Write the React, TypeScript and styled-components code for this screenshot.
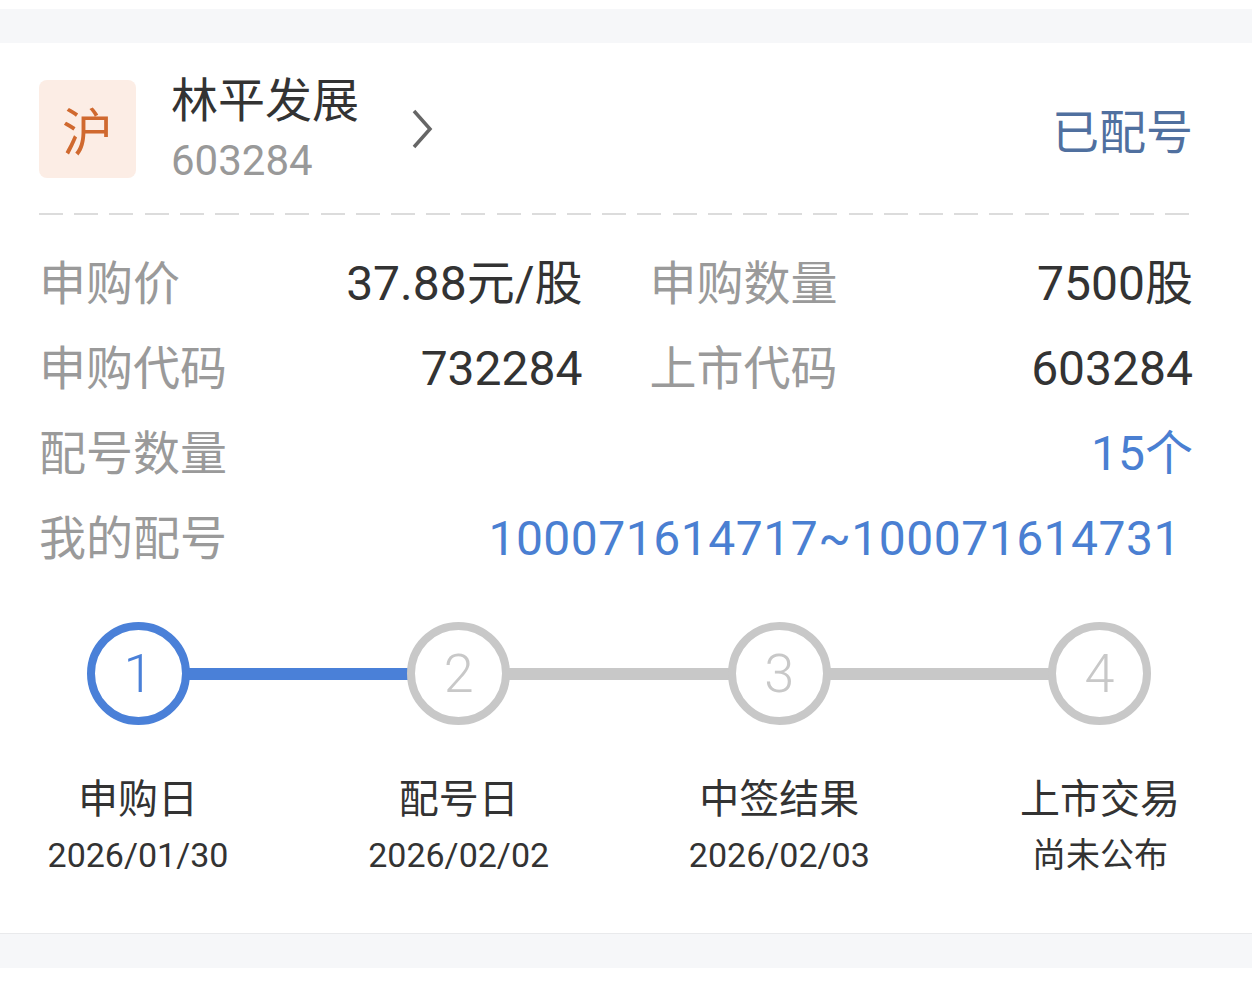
import React from 'react';
import styled, { createGlobalStyle } from 'styled-components';

const GlobalStyle = createGlobalStyle`
  html, body {
    margin: 0;
    padding: 0;
    background: #ffffff;
  }
  body {
    font-family: Roboto, "Noto Sans CJK SC", sans-serif;
    color: #333333;
  }
`;

const Page = styled.div`
  padding-top: 9px;
  background: #ffffff;
`;

const GrayBand = styled.div<{ $topLine?: boolean }>`
  height: 34px;
  background: #f6f7f9;
  border-top: ${(p) => (p.$topLine ? '1px solid #e9eaec' : 'none')};
`;

const Card = styled.div`
  background: #ffffff;
  padding: 29px 59px 58px 39px;
`;

const Header = styled.div`
  display: flex;
  align-items: center;
`;

const Badge = styled.div`
  width: 97px;
  height: 98px;
  border-radius: 8px;
  background: #fcede5;
  color: #d0692f;
  font-family: "Noto Sans CJK SC", sans-serif;
  font-size: 51px;
  display: flex;
  align-items: center;
  justify-content: center;
  flex-shrink: 0;
`;

const TitleBlock = styled.div`
  margin-left: 35px;
  display: flex;
  flex-direction: column;
`;

const StockName = styled.div`
  font-family: "Noto Sans CJK SC", sans-serif;
  font-size: 47px;
  line-height: 50px;
  color: #333333;
`;

const StockCode = styled.div`
  margin-top: 15px;
  font-size: 42px;
  line-height: 48px;
  color: #999999;
`;

const Chevron = styled.svg`
  margin-left: 50px;
  width: 26px;
  height: 42px;
  flex-shrink: 0;
`;

const Status = styled.div`
  margin-left: auto;
  font-family: "Noto Sans CJK SC", sans-serif;
  font-size: 47px;
  color: #50709f;
`;

const Dashed = styled.div`
  margin-top: 28px;
  height: 2px;
  background: repeating-linear-gradient(
    to right,
    #dcdcdc 0,
    #dcdcdc 24px,
    transparent 24px,
    transparent 35.2px
  );
`;

const InfoGrid = styled.div`
  margin-top: 22px;
  display: grid;
  grid-template-columns: 1fr 1fr;
  column-gap: 67px;
`;

const InfoCell = styled.div<{ $wide?: boolean }>`
  grid-column: ${(p) => (p.$wide ? '1 / -1' : 'auto')};
  display: flex;
  justify-content: space-between;
  align-items: baseline;
  height: 85px;
  line-height: 85px;
  white-space: nowrap;
`;

const Label = styled.span`
  font-family: "Noto Sans CJK SC", sans-serif;
  font-size: 47px;
  color: #9a9a9a;
`;

const Value = styled.span<{ $blue?: boolean; $inset?: number }>`
  font-size: 48px;
  color: ${(p) => (p.$blue ? '#4a7fd2' : '#333333')};
  letter-spacing: ${(p) => (p.$inset ? '0.5px' : '0')};
  padding-right: ${(p) => p.$inset ?? 0}px;
`;

const Track = styled.div`
  margin-top: 45px;
  padding: 0 42px 0 48px;
  display: flex;
  align-items: center;
`;

const StepCircle = styled.div<{ $active?: boolean }>`
  width: 103px;
  height: 103px;
  box-sizing: border-box;
  border-radius: 50%;
  border: 8px solid ${(p) => (p.$active ? '#4a80d8' : '#c8c8c8')};
  color: ${(p) => (p.$active ? '#4a80d8' : '#c8c8c8')};
  font-size: 54px;
  font-weight: 300;
  display: flex;
  align-items: center;
  justify-content: center;
  flex-shrink: 0;
`;

const Connector = styled.div<{ $active?: boolean }>`
  flex: 1;
  height: 12px;
  margin: 0 -2px;
  background: ${(p) => (p.$active ? '#4a80d8' : '#c8c8c8')};
`;

const Captions = styled.div`
  margin: 47px -7px 0 -1px;
  display: flex;
  justify-content: space-between;
`;

const Caption = styled.div`
  width: 200px;
  display: flex;
  flex-direction: column;
  align-items: center;
  color: #333333;
`;

const CaptionTitle = styled.div`
  font-family: "Noto Sans CJK SC", sans-serif;
  font-size: 40px;
  line-height: 48px;
`;

const CaptionDate = styled.div`
  margin-top: 15px;
  font-size: 34px;
  line-height: 40px;
`;

const steps = [
  { n: '1', title: '申购日', date: '2026/01/30' },
  { n: '2', title: '配号日', date: '2026/02/02' },
  { n: '3', title: '中签结果', date: '2026/02/03' },
  { n: '4', title: '上市交易', date: '尚未公布' },
];

const App = () => {
  // index of the step reached; the segment after it is drawn as in progress
  const current = 0;

  return (
    <Page>
      <GlobalStyle />
      <GrayBand />
      <Card>
        <Header>
          <Badge>沪</Badge>
          <TitleBlock>
            <StockName>林平发展</StockName>
            <StockCode>603284</StockCode>
          </TitleBlock>
          <Chevron viewBox="0 0 26 42">
            <polyline points="5,3 21,21 5,39" fill="none" stroke="#666666" strokeWidth="3.5" />
          </Chevron>
          <Status>已配号</Status>
        </Header>
        <Dashed />
        <InfoGrid>
          <InfoCell>
            <Label>申购价</Label>
            <Value>37.88元/股</Value>
          </InfoCell>
          <InfoCell>
            <Label>申购数量</Label>
            <Value>7500股</Value>
          </InfoCell>
          <InfoCell>
            <Label>申购代码</Label>
            <Value>732284</Value>
          </InfoCell>
          <InfoCell>
            <Label>上市代码</Label>
            <Value>603284</Value>
          </InfoCell>
          <InfoCell $wide>
            <Label>配号数量</Label>
            <Value $blue>15个</Value>
          </InfoCell>
          <InfoCell $wide>
            <Label>我的配号</Label>
            <Value $blue $inset={12}>100071614717~100071614731</Value>
          </InfoCell>
        </InfoGrid>
        <Track>
          {steps.map((s, i) => (
            <React.Fragment key={s.n}>
              {i > 0 && <Connector $active={i <= current + 1} />}
              <StepCircle $active={i <= current}>{s.n}</StepCircle>
            </React.Fragment>
          ))}
        </Track>
        <Captions>
          {steps.map((s) => (
            <Caption key={s.n}>
              <CaptionTitle>{s.title}</CaptionTitle>
              <CaptionDate>{s.date}</CaptionDate>
            </Caption>
          ))}
        </Captions>
      </Card>
      <GrayBand $topLine />
    </Page>
  );
};

export default App;
